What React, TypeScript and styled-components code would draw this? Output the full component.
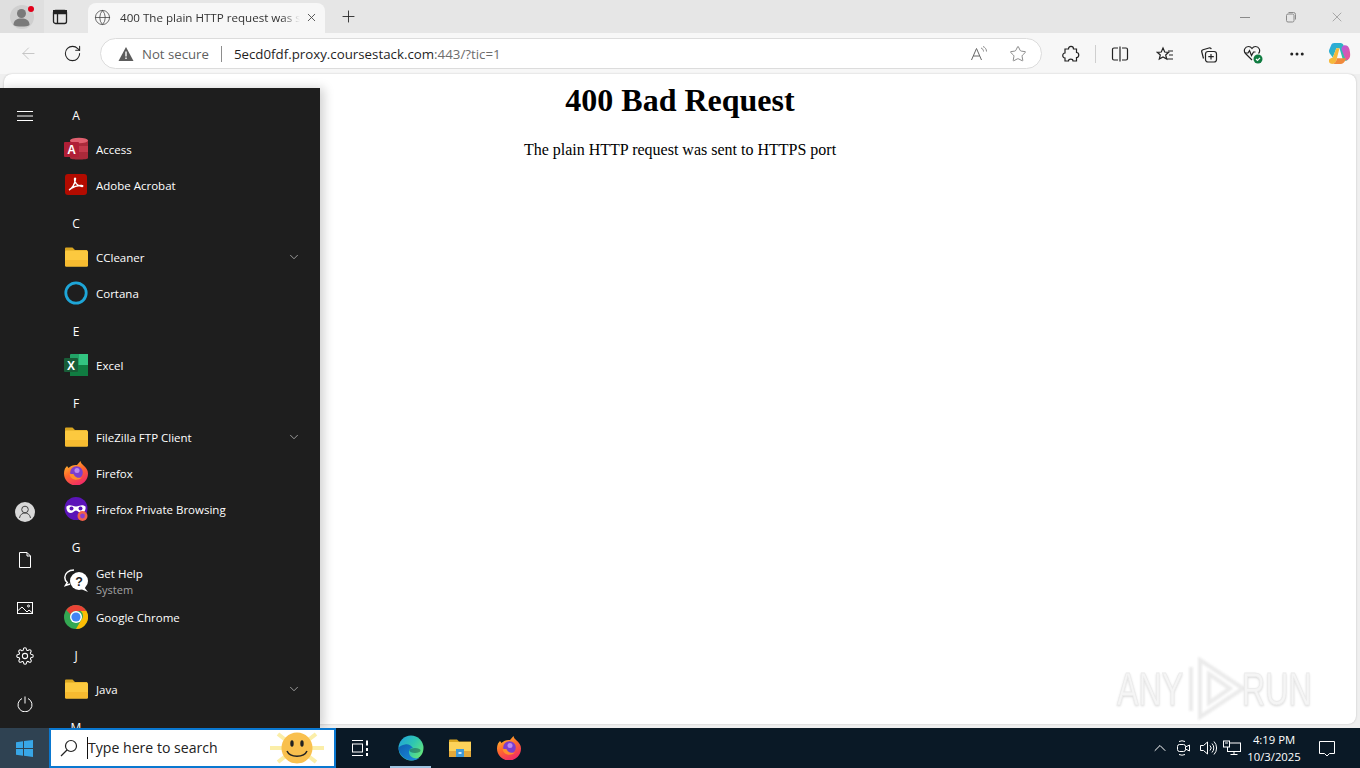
import React from "react";
import styled, { createGlobalStyle } from "styled-components";
import { ArrowLeft, ChevronDown, ChevronUp, Ellipsis, Globe, Plus, RotateCw, Star, X } from "lucide-react";

const GlobalStyle = createGlobalStyle`
  html, body {
    margin: 0;
    padding: 0;
    height: 100%;
    overflow: hidden;
  }
  #root {
    height: 100%;
  }
`;

const uiFont = `"Open Sans", "Noto Sans", "Liberation Sans", sans-serif`;

const Screen = styled.div`
  position: relative;
  width: 1360px;
  height: 768px;
  display: flex;
  flex-direction: column;
  overflow: hidden;
  background: #efefef;
  font-family: ${uiFont};
`;

/* browser chrome */
const TabStrip = styled.div`
  height: 33px;
  flex: none;
  display: flex;
  align-items: flex-end;
  background: #e6e6e6;
`;

const StripButton = styled.div<{ $w: number; $mr?: number }>`
  width: ${(p) => p.$w}px;
  height: 33px;
  margin-right: ${(p) => p.$mr ?? 0}px;
  flex: none;
  display: flex;
  align-items: center;
  justify-content: center;
  color: #222;
`;

const ProfileSlot = styled(StripButton)`
  position: relative;
  background: #dfdfdf;
`;

const RedDot = styled.span`
  position: absolute;
  top: 6px;
  left: 28px;
  width: 6px;
  height: 6px;
  border-radius: 50%;
  background: #e2001a;
`;

const Tab = styled.div`
  width: 237px;
  height: 30px;
  flex: none;
  display: flex;
  align-items: center;
  gap: 9px;
  padding: 0 7px 2px 6px;
  box-sizing: border-box;
  background: #f7f7f7;
  border-radius: 8px 8px 0 0;
  color: #444;
`;

const TabTitle = styled.span`
  flex: 1;
  margin-right: -4px;
  overflow: hidden;
  white-space: nowrap;
  font-size: 11.6px;
  color: #333;
  -webkit-mask-image: linear-gradient(to right, #000 90%, transparent 100%);
  mask-image: linear-gradient(to right, #000 90%, transparent 100%);
`;

const WindowControls = styled.div`
  margin-left: auto;
  display: flex;
  color: #8a8a8a;
`;

const WindowButton = styled.div`
  width: 46px;
  height: 33px;
  display: flex;
  align-items: center;
  justify-content: center;
`;

const Toolbar = styled.div`
  height: 41px;
  flex: none;
  display: flex;
  align-items: center;
  padding: 0 6px 0 10px;
  background: #f7f7f7;
`;

const ToolIcon = styled.div<{ $w?: number; $mr?: number }>`
  width: ${(p) => p.$w ?? 36}px;
  height: 32px;
  margin-right: ${(p) => p.$mr ?? 0}px;
  flex: none;
  display: flex;
  align-items: center;
  justify-content: center;
  color: #222;
`;

const AddressBar = styled.div`
  width: 942px;
  height: 31px;
  margin: 0 11px 0 2px;
  flex: none;
  display: flex;
  align-items: center;
  box-sizing: border-box;
  padding: 0 4px 0 17px;
  background: #fff;
  border: 1px solid #dcdcdc;
  border-radius: 16px;
`;

const NotSecure = styled.span`
  margin-left: 8px;
  font-size: 13.2px;
  color: #5f5f5f;
`;

const AddressDivider = styled.span`
  width: 1px;
  height: 16px;
  margin: 0 12px;
  background: #8d8d8d;
`;

const Url = styled.span`
  flex: 1;
  font-size: 13.3px;
  color: #1f1f1f;
  white-space: nowrap;
`;

const UrlTail = styled.span`
  color: #6d6d6d;
`;

const ToolSeparator = styled.span`
  width: 1px;
  height: 18px;
  margin: 0 6px;
  flex: none;
  background: #cfcfcf;
`;

/* page */
const PageArea = styled.div`
  flex: 1;
  min-height: 0;
  padding: 0 4px 4px;
`;

const Page = styled.main`
  height: 100%;
  box-sizing: border-box;
  padding-top: 8px;
  background: #fff;
  border-radius: 8px;
  box-shadow: 0 0 2px rgba(0, 0, 0, 0.22);
  font-family: "Liberation Serif", serif;
  color: #000;
  text-align: center;
`;

const Heading = styled.h1`
  margin: 0 0 22px;
  font-size: 32px;
  line-height: 37px;
  font-weight: 700;
`;

const Message = styled.p`
  margin: 0;
  font-size: 16px;
  line-height: 17px;
`;

const Watermark = styled.div`
  position: absolute;
  left: 1117px;
  top: 657px;
  width: 195px;
  height: 63px;
  display: flex;
  align-items: center;
  justify-content: space-between;
  font-family: "Liberation Sans", sans-serif;
  font-size: 46px;
  color: #f5f5f5;
  -webkit-text-stroke: 1px #ececec;
  text-shadow: 0 1px 3px #cfcfcf;
  pointer-events: none;
`;

const WatermarkWord = styled.span<{ $origin: string }>`
  display: inline-block;
  transform: scaleX(0.7);
  transform-origin: ${(p) => p.$origin} center;
`;

const WatermarkMark = styled.svg`
  position: absolute;
  left: 71px;
  top: 0;
  filter: blur(0.8px);
`;

/* start menu */
const StartMenu = styled.nav`
  position: absolute;
  left: 0;
  top: 88px;
  width: 320px;
  height: 640px;
  display: flex;
  background: #1e1e1e;
  box-shadow: 4px 0 10px rgba(0, 0, 0, 0.18);
  color: #fff;
  overflow: hidden;
`;

const Rail = styled.div`
  width: 48px;
  flex: none;
  display: flex;
  flex-direction: column;
  justify-content: space-between;
  padding: 4px 0 0 1px;
  box-sizing: border-box;
`;

const RailGroup = styled.div`
  display: flex;
  flex-direction: column;
`;

const RailButton = styled.div`
  height: 48px;
  display: flex;
  align-items: center;
  justify-content: center;
`;

const AppList = styled.div`
  flex: 1;
  padding: 7px 17px 0 16px;
`;

const Letter = styled.div`
  height: 36px;
  width: 24px;
  padding-top: 6px;
  box-sizing: border-box;
  font-size: 12px;
  line-height: 30px;
  text-align: center;
`;

const AppRow = styled.div`
  height: 36px;
  display: flex;
  align-items: center;
  gap: 8px;
  font-size: 11.5px;
  color: #fff;
`;

const AppIconBox = styled.div`
  width: 24px;
  height: 24px;
  flex: none;
`;

const AppName = styled.div`
  flex: 1;
  padding-top: 1px;
  line-height: 16px;
  white-space: nowrap;
`;

const AppSub = styled.div`
  font-size: 11px;
  color: #a4a4a4;
`;

const Expand = styled.div`
  width: 16px;
  margin-right: 1px;
  display: flex;
  justify-content: center;
  color: #cfcfcf;
`;

/* taskbar */
const Taskbar = styled.footer`
  position: relative;
  z-index: 2;
  height: 40px;
  flex: none;
  display: flex;
  align-items: stretch;
  background: #0a1926;
  color: #fff;
`;

const StartButton = styled.div`
  width: 49px;
  flex: none;
  display: flex;
  align-items: center;
  justify-content: center;
  background: #2f4252;
`;

const SearchBox = styled.div`
  width: 287px;
  flex: none;
  display: flex;
  align-items: center;
  box-sizing: border-box;
  padding-left: 9px;
  background: #fff;
  border: 2px solid #0a78d0;
  color: #222;
`;

const SearchText = styled.span`
  margin-left: 9px;
  border-left: 1px solid #111;
  font-size: 14.1px;
  line-height: 22px;
  white-space: nowrap;
`;

const Sun = styled.div`
  margin-left: auto;
  margin-right: 8px;
  height: 36px;
`;

const TaskItem = styled.div<{ $active?: boolean; $w?: number; $ml?: number }>`
  position: relative;
  width: ${(p) => p.$w ?? 49}px;
  margin-left: ${(p) => p.$ml ?? 0}px;
  flex: none;
  display: flex;
  align-items: center;
  justify-content: center;
  &::after {
    content: "";
    display: ${(p) => (p.$active ? "block" : "none")};
    position: absolute;
    left: 4px;
    right: 4px;
    bottom: 0;
    height: 2px;
    background: #9ec3e0;
  }
`;

const TaskItems = styled.div`
  display: flex;
`;

const Tray = styled.div`
  margin-left: auto;
  display: flex;
  align-items: center;
`;

const TrayIcon = styled.div`
  width: 24px;
  height: 40px;
  display: flex;
  align-items: center;
  justify-content: center;
`;

const Clock = styled.div`
  width: 60px;
  margin-right: 6px;
  font-size: 11.3px;
  line-height: 17px;
  text-align: center;
  white-space: nowrap;
`;

const Notify = styled.div`
  width: 34px;
  margin-right: 16px;
  display: flex;
  justify-content: center;
`;

/* drawn icons */
const Svg: React.FC<{ s?: number; vb?: number; children: React.ReactNode }> = ({ s = 16, vb = 16, children }) => (
  <svg width={s} height={s} viewBox={`0 0 ${vb} ${vb}`} fill="none" stroke="currentColor" strokeWidth="1">
    {children}
  </svg>
);

const FolderIcon = () => (
  <Svg s={24} vb={24}>
    <path d="M1 6V3.500a1 1 0 0 1 1-1h6.500L11 5h12v3H1z" fill="#d9a520" stroke="none" />
    <rect x="1" y="5.500" width="23" height="16" rx="1.200" fill="#fcc93f" stroke="none" />
    <rect x="1" y="15" width="23" height="6.500" rx="1.200" fill="#f7bb30" stroke="none" />
  </Svg>
);

const FirefoxIcon: React.FC<{ s?: number; id: string }> = ({ s = 24, id }) => (
  <Svg s={s} vb={24}>
    <defs>
      <linearGradient id={id} x1="0.2" y1="0" x2="0.7" y2="1">
        <stop offset="0" stopColor="#ffc22e" />
        <stop offset="0.45" stopColor="#ff6a2c" />
        <stop offset="1" stopColor="#f0256c" />
      </linearGradient>
    </defs>
    <path d="M1 7.500l2 -2.500 1.500 2C7 4.500 10 3.500 13 4L16.500 0c.3 2 1.500 3 2.800 4.200C22 6.500 24 9 24 12.500A12 12 0 1 1 0 12.500c0-1.800.3-3.500 1-5z" fill={`url(#${id})`} stroke="none" />
    <circle cx="12.500" cy="11.500" r="6.300" fill="#7b3fd0" stroke="none" />
    <path d="M5.500 13c1 6 8 7.500 12.500 3.500-3.500 1-7 0-8.500-3.500z" fill="#ff8f2c" stroke="none" />
    <circle cx="13" cy="9.500" r="2.500" fill="#b98bf0" stroke="none" />
  </Svg>
);

const AccessIcon = () => (
  <Svg s={24} vb={24}>
    <path d="M6 3.500C6 1.500 24 1.500 24 3.500V21c0 2-18 2-18 0z" fill="#a92a3a" stroke="none" />
    <ellipse cx="15" cy="3.500" rx="9" ry="2.800" fill="#e0606f" stroke="none" />
    <rect x="6" y="9" width="18" height="6" fill="#c23a4b" stroke="none" />
    <rect x="0" y="5" width="15" height="15" rx="1" fill="#b01f36" stroke="none" />
    <text x="7.500" y="16.500" fontSize="12" fontWeight="700" textAnchor="middle" fill="#fff" stroke="none" fontFamily="Liberation Sans, sans-serif">A</text>
  </Svg>
);

const AcrobatIcon = () => (
  <Svg s={24} vb={24}>
    <rect x="1" y="1" width="22" height="21" rx="3" fill="#b30b00" stroke="none" />
    <path d="M5 17c3-1.500 6-6 6.500-11 .2-1-.8-1-1 0-.4 3 3 7.500 7.500 7.500 1 0 1-1 0-1-3.500-.3-8 1-12 3.500" stroke="#fff" strokeWidth="1.400" />
  </Svg>
);

const CortanaIcon = () => (
  <Svg s={24} vb={24}>
    <circle cx="12" cy="12" r="10.200" stroke="#1ea6d8" strokeWidth="2.800" />
  </Svg>
);

const ExcelIcon = () => (
  <Svg s={24} vb={24}>
    <rect x="6" y="1" width="18" height="22" rx="1" fill="#21a366" stroke="none" />
    <rect x="15" y="1" width="9" height="11" fill="#33c481" stroke="none" />
    <rect x="6" y="12" width="18" height="11" fill="#107c41" stroke="none" />
    <rect x="0" y="5" width="14" height="14" rx="1" fill="#185c37" stroke="none" />
    <text x="7" y="16.500" fontSize="12" fontWeight="700" textAnchor="middle" fill="#fff" stroke="none" fontFamily="Liberation Sans, sans-serif">X</text>
  </Svg>
);

const PrivateIcon = () => (
  <Svg s={24} vb={24}>
    <circle cx="12" cy="11.500" r="11.500" fill="#5b14b8" stroke="none" />
    <path d="M2.500 9.500c3-2.500 5.500-1 9.500 0 4-1 6.500-2.500 9.500 0 .6 4-1.500 6.500-4.500 6.500-2.500 0-3-2.500-5-2.500s-2.500 2.500-5 2.500c-3 0-5.100-2.500-4.500-6.500z" fill="#fff" stroke="none" />
    <circle cx="7.500" cy="11.500" r="2" fill="#5b14b8" stroke="none" />
    <circle cx="16.500" cy="11.500" r="2" fill="#5b14b8" stroke="none" />
    <circle cx="18.500" cy="19" r="5" fill="#f0604a" stroke="none" />
    <circle cx="18.500" cy="19" r="2.400" fill="#8a3fd0" stroke="none" />
  </Svg>
);

const HelpIcon = () => (
  <Svg s={24} vb={24}>
    <path d="M10 1C4.500 1 .8 4.500.8 8.500c0 2 1 3.800 2.500 5L1.500 16.500l4.500-1.500" stroke="#fff" strokeWidth="1.500" fill="none" />
    <circle cx="15" cy="12" r="9" fill="#fff" stroke="none" />
    <path d="M20 18l4 5-7-3z" fill="#fff" stroke="none" />
    <text x="15" y="16.500" fontSize="12.500" fontWeight="700" textAnchor="middle" fill="#1e1e1e" stroke="none" fontFamily="Liberation Sans, sans-serif">?</text>
  </Svg>
);

const ChromeIcon = () => (
  <svg width="24" height="24" viewBox="0 0 24 24">
    <circle cx="12" cy="12" r="12" fill="#34a853" />
    <path d="M12 0a12 12 0 0 1 10.400 6H12a6 6 0 0 0-5.500 3.500L2.300 5A12 12 0 0 1 12 0z" fill="#ea4335" />
    <path d="M22.400 6A12 12 0 0 1 12 24l5.200-9a6 6 0 0 0-.4-9z" fill="#fbbc04" />
    <circle cx="12" cy="12" r="6" fill="#fff" />
    <circle cx="12" cy="12" r="4.600" fill="#4285f4" />
  </svg>
);

const EdgeIcon = () => (
  <svg width="26" height="26" viewBox="0 0 26 26">
    <defs>
      <linearGradient id="edgeA" x1="0" y1="0" x2="1" y2="0.7">
        <stop offset="0" stopColor="#1f9ee0" />
        <stop offset="0.55" stopColor="#2fc7b0" />
        <stop offset="1" stopColor="#66e57a" />
      </linearGradient>
      <linearGradient id="edgeB" x1="0" y1="0" x2="1" y2="1">
        <stop offset="0" stopColor="#0f5fb0" />
        <stop offset="1" stopColor="#1b8fe0" />
      </linearGradient>
    </defs>
    <circle cx="13" cy="13" r="12.500" fill="url(#edgeA)" />
    <path d="M.5 13C1 19.500 7 25.500 14 25.500c3 0 5.500-1 7.500-2.500-5 1.500-10-1-10.500-5.500-.3-2.500 1.500-4.500 4-4.500-2-3-5.500-4.500-8-3.500C4 10 1.500 11 .5 13z" fill="url(#edgeB)" />
    <ellipse cx="17" cy="15.500" rx="5.500" ry="2.600" fill="#0a1926" opacity="0.35" />
  </svg>
);

const ExplorerIcon = () => (
  <svg width="24" height="24" viewBox="0 0 24 24">
    <path d="M1 4.500a1 1 0 0 1 1-1h7l2 2h12v3H1z" fill="#d9a520" />
    <rect x="1" y="6" width="22" height="15" fill="#fcd25a" />
    <rect x="1" y="15" width="22" height="6" fill="#e3a93a" />
    <rect x="8" y="13" width="8" height="8" fill="#3f9ad8" />
    <rect x="10.500" y="16" width="3" height="2" fill="#d5ebf8" />
  </svg>
);

const CopilotIcon = () => (
  <svg width="23" height="23" viewBox="0 0 22 22">
    <defs>
      <linearGradient id="copA" x1="0" y1="0" x2="1" y2="1">
        <stop offset="0" stopColor="#2aa5e8" />
        <stop offset="1" stopColor="#37c98b" />
      </linearGradient>
      <linearGradient id="copB" x1="0" y1="0" x2="1" y2="1">
        <stop offset="0" stopColor="#b25be0" />
        <stop offset="1" stopColor="#f0568f" />
      </linearGradient>
    </defs>
    <path d="M6 1h6c1.500 0 2.500 1 3 2.500L19 15c.5 2-1 3-2.500 3h-2L11 6H8L4.500 15C3.800 13 .5 11 1 8l2-5C3.500 1.800 4.500 1 6 1z" fill="url(#copA)" />
    <path d="M16 3c2.500 0 4 1.500 4.500 4 .5 2.500 1 5 .5 7-.5 2-2 3.500-4 3.500L13 7c-.5-1.500 1-4 3-4z" fill="url(#copB)" />
    <path d="M4.500 15L8 6h3l-2.500 9.500C8 19 6.500 21 4 21c-2.500 0-3.500-2-3-4 .5-1.500 2-1.500 3.500-2z" fill="#f6b93b" />
    <path d="M8.500 15.500h9C16 19.500 14 21 12 21H4c2.500 0 4-2.500 4.500-5.500z" fill="#f08a3c" />
  </svg>
);

const SunFace = () => (
  <svg width="58" height="36" viewBox="0 0 58 36">
    <g stroke="#fbeea8" strokeWidth="4">
      <path d="M2 18h12M44 18h12M10 4l9 7M48 4l-9 7M10 32l9-7M48 32l-9-7" />
    </g>
    <circle cx="29" cy="18" r="15.500" fill="#f9c04e" />
    <ellipse cx="24" cy="13.500" rx="1.700" ry="3.200" fill="#222" />
    <ellipse cx="34" cy="13.500" rx="1.700" ry="3.200" fill="#222" />
    <path d="M19 21c3 7 17 7 20 0" stroke="#222" strokeWidth="1.500" fill="none" />
  </svg>
);

const apps: (
  | { letter: string }
  | { name: string; sub?: string; icon: React.ReactNode; expand?: boolean }
)[] = [
  { letter: "A" },
  { name: "Access", icon: <AccessIcon /> },
  { name: "Adobe Acrobat", icon: <AcrobatIcon /> },
  { letter: "C" },
  { name: "CCleaner", icon: <FolderIcon />, expand: true },
  { name: "Cortana", icon: <CortanaIcon /> },
  { letter: "E" },
  { name: "Excel", icon: <ExcelIcon /> },
  { letter: "F" },
  { name: "FileZilla FTP Client", icon: <FolderIcon />, expand: true },
  { name: "Firefox", icon: <FirefoxIcon id="ffxMenu" /> },
  { name: "Firefox Private Browsing", icon: <PrivateIcon /> },
  { letter: "G" },
  { name: "Get Help", sub: "System", icon: <HelpIcon /> },
  { name: "Google Chrome", icon: <ChromeIcon /> },
  { letter: "J" },
  { name: "Java", icon: <FolderIcon />, expand: true },
  { letter: "M" },
];

export default function App() {
  return (
    <Screen>
      <GlobalStyle />
      <TabStrip>
        <ProfileSlot $w={44}>
          <svg width="24" height="24" viewBox="0 0 24 24">
            <circle cx="12" cy="12" r="12" fill="#cfcfcf" />
            <circle cx="11.500" cy="8.500" r="4.500" fill="#7a7a7a" />
            <path d="M3.500 20c0-5 3.500-6.500 8-6.500s8 1.500 8 6.500c-2 2-13.500 2-16 0z" fill="#7a7a7a" />
          </svg>
          <RedDot />
        </ProfileSlot>
        <StripButton $w={32} $mr={12}>
          <Svg s={16}>
            <rect x="1.500" y="1.500" width="13" height="13" rx="2" strokeWidth="1.300" />
            <path d="M1.500 4.500h13M5.500 4.500v10" strokeWidth="1.300" />
            <rect x="1.500" y="1.500" width="13" height="3" fill="currentColor" />
          </Svg>
        </StripButton>
        <Tab>
          <Globe size={17} strokeWidth={1.1} />
          <TabTitle>400 The plain HTTP request was sent to HTTPS port</TabTitle>
          <X size={13} strokeWidth={1.6} />
        </Tab>
        <StripButton $w={46}>
          <Plus size={19} strokeWidth={1.1} />
        </StripButton>
        <WindowControls>
          <WindowButton>
            <Svg s={12} vb={12}><path d="M1 6.500h10" /></Svg>
          </WindowButton>
          <WindowButton>
            <Svg s={12} vb={12}>
              <rect x="1.500" y="3" width="7.500" height="8" rx="1.500" />
              <path d="M3.500 1.500h5a2 2 0 0 1 2 2v5" />
            </Svg>
          </WindowButton>
          <WindowButton>
            <X size={16} strokeWidth={1} />
          </WindowButton>
        </WindowControls>
      </TabStrip>

      <Toolbar>
        <ToolIcon>
          <ArrowLeft size={19} strokeWidth={1} color="#b9b9b9" />
        </ToolIcon>
        <ToolIcon $w={52}>
          <RotateCw size={19} strokeWidth={1.3} />
        </ToolIcon>
        <AddressBar>
          <svg width="16" height="16" viewBox="0 0 16 16">
            <path d="M8 1l7.500 14H.5z" fill="#5c5c5c" />
            <rect x="7.300" y="5.500" width="1.400" height="5" fill="#fff" />
            <rect x="7.300" y="11.500" width="1.400" height="1.500" fill="#fff" />
          </svg>
          <NotSecure>Not secure</NotSecure>
          <AddressDivider />
          <Url>
            5ecd0fdf.proxy.coursestack.com<UrlTail>:443/?tic=1</UrlTail>
          </Url>
          <ToolIcon $w={40}>
            <Svg s={18} vb={18}>
              <path d="M1.500 15L6.500 3.500 11.500 15M3.300 11h6.400" stroke="#666" />
              <path d="M11 3c1.500.5 2.500 1.800 2.500 3.500M13 1.500c2 .8 3.500 2.500 3.500 5" stroke="#888" />
            </Svg>
          </ToolIcon>
          <ToolIcon $w={38}>
            <Star size={18} strokeWidth={1} color="#666" />
          </ToolIcon>
        </AddressBar>
        <ToolIcon $w={36}>
          <Svg s={18} vb={18}>
            <path d="M6.500 4c0-3.500 5-3.500 5 0h3v3.500c3 0 3 5 0 5V16h-3.500c0-2.500-4.500-2.500-4.500 0H3v-3c-3 0-3-5 0-5V4z" strokeWidth="1.200" />
          </Svg>
        </ToolIcon>
        <ToolSeparator />
        <ToolIcon $w={36} $mr={5}>
          <Svg s={18} vb={18}>
            <path d="M7 3H3a1.500 1.500 0 0 0-1.500 1.500v9A1.500 1.500 0 0 0 3 15h4M11 3h4a1.500 1.500 0 0 1 1.500 1.500v9A1.500 1.500 0 0 1 15 15h-4M9 1.500v15" strokeWidth="1.200" />
          </Svg>
        </ToolIcon>
        <ToolIcon $w={44}>
          <Svg s={18} vb={18}>
            <path d="M7 3l1.700 4 4 .3-3 2.700 1 4L7 12l-3.700 2 1-4-3-2.700 4-.3z" strokeWidth="1.200" />
            <path d="M12 6h5M13 10h4M11 14h6" strokeWidth="1.200" />
          </Svg>
        </ToolIcon>
        <ToolIcon $w={44}>
          <Svg s={18} vb={18}>
            <path d="M3.500 13.500L1.800 7c-.3-1 .2-2 1.200-2.300L9 3c1-.3 2 .2 2.300 1.200" strokeWidth="1.200" />
            <rect x="5.500" y="6.500" width="11" height="10.500" rx="2.500" strokeWidth="1.200" />
            <path d="M11 9v5.500M8.300 11.700h5.500" strokeWidth="1.200" />
          </Svg>
        </ToolIcon>
        <ToolIcon $w={44}>
          <svg width="20" height="20" viewBox="0 0 20 20" fill="none" stroke="currentColor" strokeWidth="1.200">
            <path d="M9 16L2.500 9.500C0 6.500 2 2.500 5.500 2.500c1.500 0 2.700.8 3.500 2 .8-1.200 2-2 3.500-2 3.500 0 5.500 4 3 7" />
            <path d="M2 9h3l1.500-2.500 2 5 2-3.500h2" />
            <circle cx="15" cy="15" r="4.500" fill="#107c41" stroke="none" />
            <path d="M13 15l1.500 1.500L17 13.800" stroke="#fff" />
          </svg>
        </ToolIcon>
        <ToolIcon $w={44}>
          <Ellipsis size={18} strokeWidth={2} />
        </ToolIcon>
        <ToolIcon $w={40}>
          <CopilotIcon />
        </ToolIcon>
      </Toolbar>

      <PageArea>
        <Page>
          <Heading>400 Bad Request</Heading>
          <Message>The plain HTTP request was sent to HTTPS port</Message>
        </Page>
      </PageArea>

      <Watermark>
        <WatermarkWord $origin="left">ANY</WatermarkWord>
        <WatermarkMark width="58" height="63" viewBox="0 0 58 63" fill="none" stroke="#ebebeb" strokeWidth="4">
          <path d="M3 10v44M12 3l43 28.500-43 28.500z" />
          <path d="M21 17l21 14.500-21 14.500z" />
        </WatermarkMark>
        <WatermarkWord $origin="right">RUN</WatermarkWord>
      </Watermark>

      <StartMenu>
        <Rail>
          <RailGroup>
            <RailButton>
              <Svg s={16}><path d="M0 3.500h16M0 8h16M0 12.500h16" /></Svg>
            </RailButton>
          </RailGroup>
          <RailGroup>
            <RailButton>
              <svg width="20" height="20" viewBox="0 0 20 20" fill="none">
                <circle cx="10" cy="10" r="10" fill="#d8d8d8" />
                <circle cx="10" cy="7.500" r="3.300" stroke="#444" />
                <path d="M4.500 16c.5-3.500 3-5 5.500-5s5 1.500 5.500 5" stroke="#444" />
              </svg>
            </RailButton>
            <RailButton>
              <Svg s={16}><path d="M2.500.5h7.500l3.500 3.500v11.500h-11zM10 .5v3.500h3.500" /></Svg>
            </RailButton>
            <RailButton>
              <Svg s={16}>
                <rect x=".5" y="2.500" width="15" height="11" />
                <path d="M.5 11l4.500-4 5 5 2-2 3.500 3" />
                <circle cx="11.500" cy="6" r="1" />
              </Svg>
            </RailButton>
            <RailButton>
              <svg width="18" height="18" viewBox="0 0 24 24" fill="none" stroke="currentColor" strokeWidth="1.400">
                <circle cx="12" cy="12" r="3.500" />
                <path d="M19.400 15a1.650 1.650 0 0 0 .33 1.820l.06.06a2 2 0 1 1-2.830 2.830l-.06-.06a1.650 1.650 0 0 0-2.800 1.170V21a2 2 0 1 1-4 0v-.09a1.650 1.650 0 0 0-2.800-1.170l-.06.06a2 2 0 1 1-2.830-2.830l.06-.06a1.650 1.650 0 0 0-1.170-2.800H3a2 2 0 1 1 0-4h.09a1.650 1.650 0 0 0 1.170-2.800l-.06-.06a2 2 0 1 1 2.830-2.830l.06.06a1.650 1.650 0 0 0 2.800-1.170V3a2 2 0 1 1 4 0v.09a1.650 1.650 0 0 0 2.800 1.170l.06-.06a2 2 0 1 1 2.830 2.830l-.06.06a1.650 1.650 0 0 0 1.170 2.800H21a2 2 0 1 1 0 4h-.09a1.650 1.650 0 0 0-1.510 1z" />
              </svg>
            </RailButton>
            <RailButton>
              <Svg s={16}>
                <path d="M5 2.500a7 7 0 1 0 6 0M8 .5v7" />
              </Svg>
            </RailButton>
          </RailGroup>
        </Rail>
        <AppList>
          {apps.map((app) =>
            "letter" in app ? (
              <Letter key={app.letter}>{app.letter}</Letter>
            ) : (
              <AppRow key={app.name}>
                <AppIconBox>{app.icon}</AppIconBox>
                <AppName>
                  {app.name}
                  {app.sub && <AppSub>{app.sub}</AppSub>}
                </AppName>
                {app.expand && (
                  <Expand>
                    <ChevronDown size={14} strokeWidth={1.2} />
                  </Expand>
                )}
              </AppRow>
            )
          )}
        </AppList>
      </StartMenu>

      <Taskbar>
        <StartButton>
          <svg width="17" height="17" viewBox="0 0 17 17" fill="#38a6e6">
            <path d="M0 2.300l7-1v6.700H0zM8 1.100l9-1.100v8H8zM0 9h7v6.700l-7-1zM8 9h9v8l-9-1.200z" />
          </svg>
        </StartButton>
        <SearchBox>
          <Svg s={18} vb={18}>
            <circle cx="11" cy="7" r="5.500" strokeWidth="1.200" />
            <path d="M7 11l-6 6" strokeWidth="1.200" />
          </Svg>
          <SearchText>Type here to search</SearchText>
          <Sun>
            <SunFace />
          </Sun>
        </SearchBox>
        <TaskItems>
          <TaskItem $w={48}>
            <Svg s={18} vb={18}>
              <path d="M1 1.500h11M1 16.500h11" />
              <rect x="1.500" y="5" width="10" height="8" />
              <path d="M16 1.500v5M16 9v3M16 14v3" strokeWidth="2" />
            </Svg>
          </TaskItem>
          <TaskItem $active $ml={2}>
            <EdgeIcon />
          </TaskItem>
          <TaskItem>
            <ExplorerIcon />
          </TaskItem>
          <TaskItem>
            <FirefoxIcon id="ffxTask" s={24} />
          </TaskItem>
        </TaskItems>
        <Tray>
          <TrayIcon>
            <ChevronUp size={20} strokeWidth={1.2} />
          </TrayIcon>
          <TrayIcon>
            <Svg s={18} vb={18}>
              <rect x="2.500" y="5.500" width="8" height="7" rx="2" />
              <path d="M10.500 8l4-2v6l-4-2M4 2.500a7 7 0 0 1 6 0M4 15.500a7 7 0 0 0 6 0" />
            </Svg>
          </TrayIcon>
          <TrayIcon>
            <Svg s={18} vb={18}>
              <path d="M1.500 6.500h3l4-3.500v12l-4-3.500h-3zM11 6.500a3.500 3.500 0 0 1 0 5M13 4.500a6.500 6.500 0 0 1 0 9M15 2.500a9.500 9.500 0 0 1 0 13" />
            </Svg>
          </TrayIcon>
          <TrayIcon>
            <Svg s={18} vb={18}>
              <rect x="4.500" y="4" width="13" height="8.500" />
              <rect x=".5" y="2" width="6" height="6" fill="#0a1926" />
              <path d="M2 4h3M11 12.500v3M7.500 15.500h7" />
            </Svg>
          </TrayIcon>
          <Clock>
            4:19 PM
            <br />
            10/3/2025
          </Clock>
          <Notify>
            <Svg s={18} vb={18}>
              <path d="M1.500 2.500h15v12h-5l-2.500 2.500-2.500-2.500h-5z" />
            </Svg>
          </Notify>
        </Tray>
      </Taskbar>
    </Screen>
  );
}
